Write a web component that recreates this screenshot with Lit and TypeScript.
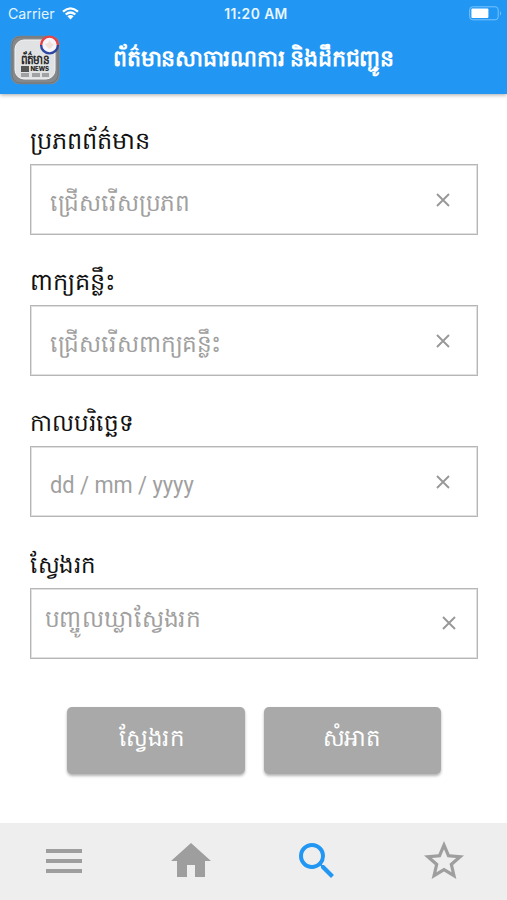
import { LitElement, html, css, svg } from 'lit';

const fields = [
  { label: 'ប្រភពព័ត៌មាន', hint: 'ជ្រើសរើសប្រភព', cls: 'pick' },
  { label: 'ពាក្យគន្លឹះ', hint: 'ជ្រើសរើសពាក្យគន្លឹះ', cls: 'pick' },
  { label: 'កាលបរិច្ឆេទ', hint: 'dd / mm / yyyy', cls: 'date' },
  { label: 'ស្វែងរក', hint: 'បញ្ចូលឃ្លាស្វែងរក', cls: 'entry' },
];

class AppRoot extends LitElement {
  static styles = css`
    :host { display: flex; flex-direction: column; width: 507px; height: 900px; background: #fff; overflow: hidden; font-family: "Noto Sans", sans-serif; }
    * { box-sizing: border-box; }
    svg { display: block; flex: none; }
    header { height: 94px; flex: none; background: #2196f3; color: #fff; box-shadow: 0 1px 4px rgba(0,0,0,.35); z-index: 1; }
    .status { display: grid; grid-template-columns: 1fr auto 1fr; height: 28px; align-items: center; padding: 0 5px 0 8px; font: 14.2px Inter, sans-serif; }
    .carrier { display: flex; gap: 7px; align-items: center; letter-spacing: 0; color: #e3f4ff; margin-top: -1px; }
    .time { font-weight: 600; font-size: 13.8px; letter-spacing: .45px; color: #e8f6ff; padding-left: 2px; }
    .battery { justify-self: end; margin-top: -1px; }
    .bar { display: grid; grid-template-columns: 103px 1fr; align-items: start; padding-left: 10px; }
    .bar svg { margin-top: 7px; }
    h1 { margin: 13px 0 0; font-size: 22.4px; line-height: 34px; font-weight: 700; white-space: nowrap; transform: scaleX(.986); transform-origin: left; }
    main { flex: 1; padding: 24px 29px 0 29.5px; }
    .field { height: 141.2px; }
    label { display: block; width: max-content; height: 46px; line-height: 44px; font-size: 24px; color: #111; white-space: nowrap; transform-origin: left; }
    .date label { transform: scaleX(.962); }
    .entry label { transform: scaleX(.95); }
    .box { display: flex; justify-content: space-between; align-items: center; height: 71px; border: 1px solid #b6b6b6; box-shadow: inset 0 0 0 1px #e0e0e0; padding: 0 27.5px 0 19.5px; }
    .hint { font-size: 24px; line-height: 36px; color: #a0a0a0; white-space: nowrap; margin-top: 4px; transform: scaleX(.966); transform-origin: left; }
    .date .hint { font: 23px/36px Roboto, sans-serif; margin-top: 9px; transform: scaleX(.948); }
    .entry .box { padding: 0 21.5px 0 14.5px; }
    .entry .hint { margin-top: -10px; }
    .actions { display: flex; gap: 19px; padding-left: 37.5px; margin-top: 24px; }
    button { width: 177.5px; height: 67px; border: 0; border-radius: 5px; background: #a9a9a9; color: #fff; font: 24px/36px "Noto Sans", sans-serif; padding: 0 8px 6px 0; box-shadow: 0 2px 3px rgba(0,0,0,.3); }
    button span { display: inline-block; transform: scaleX(.95); }
    .clear { padding: 0 1px 6px 0; }
    nav { height: 77px; flex: none; background: #eee; display: grid; grid-template-columns: repeat(4, 1fr); justify-items: center; padding: 14px 0 0 1px; color: #9e9e9e; }
    nav svg { fill: currentColor; width: 48px; height: 48px; }
    .active { color: #2196f3; }
  `;

  render() {
    return html`
      <header>
        <div class="status">
          <span class="carrier">Carrier
            <svg width="17" height="13" viewBox="0 0 17 13" fill="none" stroke="#fff" stroke-width="2.3"><path d="M1 4.6Q8.5-1.8 16 4.6M3.7 7.5Q8.5 3.4 13.3 7.5"/><path fill="#fff" stroke="none" d="M5.4 9.2Q8.5 6.7 11.6 9.2L8.5 12.5Z"/></svg>
          </span>
          <span class="time">11:20 AM</span>
          <svg class="battery" width="33" height="15" viewBox="0 0 33 15"><rect x=".7" y=".8" width="28.5" height="13" rx="3" fill="none" stroke="#79c4ff"/><rect x="2.4" y="2.6" width="17" height="9.4" rx="1" fill="#fff"/><path d="M31 5q2 2.4 0 4.8z" fill="#79c4ff"/></svg>
        </div>
        <div class="bar">
          <svg width="51" height="50" viewBox="0 0 51 50">
            <rect x=".7" y=".7" width="49" height="48.6" rx="9" fill="#85898c"/>
            <rect x="2" y="2" width="46" height="46" rx="8" fill="none" stroke="#717477"/>
            <rect x="5" y="5" width="40" height="39" rx="9" fill="#e0e2e3" stroke="#f4f4f4"/>
            <text x="10.5" y="28.7" font-size="13" font-weight="700" font-family="Noto Sans" fill="#29292b" textLength="29" lengthAdjust="spacingAndGlyphs">ព័ត៌មាន</text>
            <path d="M11 31h8v6h-8z" fill="#555"/>
            <text x="20.5" y="35.8" font-size="5.8" font-weight="800" font-family="Inter" fill="#222" textLength="18.5" lengthAdjust="spacingAndGlyphs">NEWS</text>
            <path d="M11 38h8v4h-8zM22 38h8v4h-8zM32 38h7v4h-7z" fill="#a1a2a4"/>
            <circle cx="39.5" cy="10" r="8.4" fill="#f6f6fa"/>
            <path d="M31.1 10a8.4 8.4 0 0 1 16.8 0" fill="none" stroke="#e44349" stroke-width="2.4"/>
            <path d="M31.1 10a8.4 8.4 0 0 0 16.8 0" fill="none" stroke="#2d47a0" stroke-width="2.4"/>
            <path d="M39.5 5l1.5 3 3 1-2 3-2.5 2-2.5-2-2-3 3-1z" fill="#f2dfd8"/>
          </svg>
          <h1>ព័ត៌មានសាធារណការ និងដឹកជញ្ជូន</h1>
        </div>
      </header>
      <main>
        ${fields.map(f => html`
          <div class="field ${f.cls}">
            <label>${f.label}</label>
            <div class="box">
              <span class="hint">${f.hint}</span>
              <svg width="14" height="14" viewBox="0 0 14 14"><path d="M1 1l12 12M13 1L1 13" stroke="#989898" stroke-width="1.9"/></svg>
            </div>
          </div>`)}
        <div class="actions"><button><span>ស្វែងរក</span></button><button class="clear"><span>សំអាត</span></button></div>
      </main>
      <nav>
        ${[
          svg`<path d="M3 18h18v-2H3zm0-5h18v-2H3zm0-7v2h18V6z"/>`,
          svg`<path d="M10 20v-6h4v6h5v-8h3L12 3 2 12h3v8z"/>`,
          svg`<path d="M15.5 14h-.79l-.28-.27A6.47 6.47 0 0 0 16 9.5 6.5 6.5 0 1 0 9.5 16c1.61 0 3.09-.59 4.23-1.57l.27.28v.79l5 4.99L20.49 19zm-6 0C7.01 14 5 11.99 5 9.5S7.01 5 9.5 5 14 7.01 14 9.5 11.99 14 9.5 14z"/>`,
          svg`<path d="M22 9.24l-7.19-.62L12 2 9.19 8.63 2 9.24l5.46 4.73L5.82 21 12 17.27 18.18 21l-1.63-7.03zM12 15.4l-3.76 2.27 1-4.28-3.32-2.88 4.38-.38L12 6.1l1.71 4.04 4.38.38-3.32 2.88 1 4.28z"/>`,
        ].map((p, i) => html`<svg class=${i === 2 ? 'active' : ''} viewBox="0 0 24 24">${p}</svg>`)}
      </nav>`;
  }
}
customElements.define('app-root', AppRoot);
